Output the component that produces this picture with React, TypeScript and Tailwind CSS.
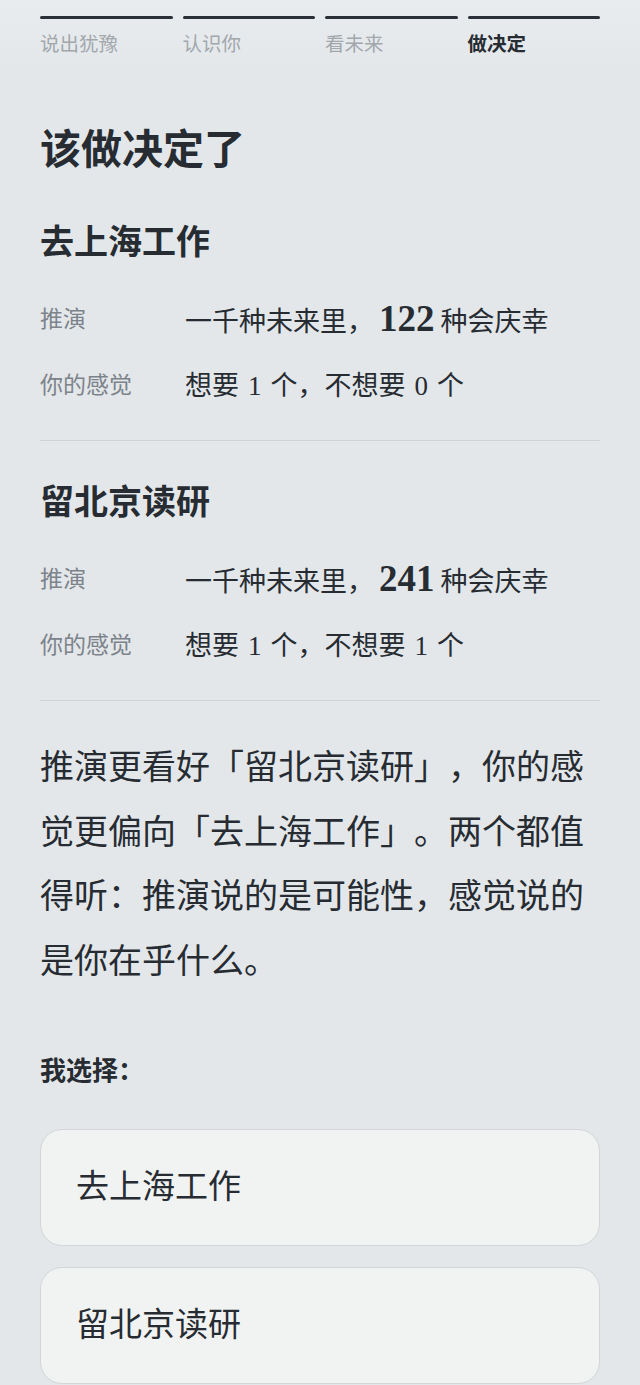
import React from "react";

const FONT = { fontFamily: '"Liberation Serif", "Noto Sans CJK SC", serif' };

function Row({ label, children }: { label: string; children: React.ReactNode }) {
  return (
    <div className="flex items-center h-[48px]">
      <div className="w-[145px] shrink-0 text-[23px] leading-[36px] text-[#7d838a]">{label}</div>
      <div className="text-[27px] leading-[36px] text-[#272c32] flex items-baseline">{children}</div>
    </div>
  );
}

function Option({
  title,
  count,
  want,
  notWant,
  first,
}: {
  title: string;
  count: number;
  want: number;
  notWant: number;
  first?: boolean;
}) {
  return (
    <section className={first ? "mt-[50px]" : "mt-[43px]"}>
      <h2 className="text-[34px] leading-[38px] font-bold text-[#272c32]">{title}</h2>
      <div className="mt-[34px]">
        <Row label="推演">
          <span>一千种未来里，</span>
          <span className="text-[37px] leading-[36px] font-bold ml-[5px] mr-[6px]">{count}</span>
          <span>种会庆幸</span>
        </Row>
      </div>
      <div className="mt-[18px]">
        <Row label="你的感觉">
          <span>想要</span>
          <span className="mx-[9px]">{want}</span>
          <span>个，不想要</span>
          <span className="mx-[9px]">{notWant}</span>
          <span>个</span>
        </Row>
      </div>
      <div className="mt-[30px] h-px bg-[#cfd3d7]" />
    </section>
  );
}

export default function App() {
  const steps = ["说出犹豫", "认识你", "看未来", "做决定"];
  return (
    <div className="min-h-[1385px] w-[640px] bg-[#e3e7ea] overflow-hidden [text-spacing-trim:space-all]" style={FONT}>
      <header className="h-[64px] px-10 pt-[16px] bg-gradient-to-b from-[#e9ecee] to-[#e4e8eb]">
        <div className="grid grid-cols-4 gap-[10px]">
          {steps.map((s, i) => (
            <div key={s}>
              <div className="h-[3px] rounded-full bg-[#2a3038]" />
              <div
                className={
                  "mt-[14px] text-[19.5px] leading-[24px] " +
                  (i === 3 ? "text-[#272c32] font-bold" : "text-[#a2a7ac]")
                }
              >
                {s}
              </div>
            </div>
          ))}
        </div>
      </header>
      <main className="px-10">
        <h1 className="mt-[62px] text-[41px] leading-[48px] font-bold text-[#272c32]">该做决定了</h1>
        <Option title="去上海工作" count={122} want={1} notWant={0} first />
        <Option title="留北京读研" count={241} want={1} notWant={1} />
        <p className="mt-[35px] text-[34px] leading-[64.5px] text-[#272c32]">
          推演更看好「留北京读研」，你的感觉更偏向「去上海工作」。两个都值得听：推演说的是可能性，感觉说的是你在乎什么。
        </p>
        <div className="mt-[62px] text-[26px] leading-[32px] font-bold text-[#272c32]">我选择：</div>
        <div className="mt-[41px] flex flex-col gap-[21px]">
          {["去上海工作", "留北京读研"].map((t) => (
            <button
              key={t}
              className="h-[117px] w-full rounded-[22px] border border-[#d3d6d9] bg-[#f1f2f2] pl-[35px] text-left text-[33px] text-[#272c32]"
              style={FONT}
            >
              {t}
            </button>
          ))}
        </div>
      </main>
    </div>
  );
}
